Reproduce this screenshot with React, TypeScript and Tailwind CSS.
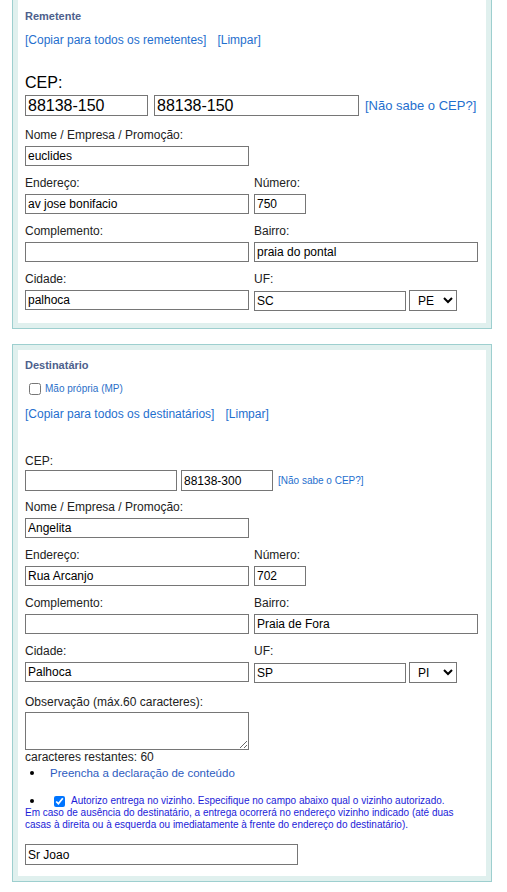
import React from 'react';

const inputCls = 'block border border-[#767676] bg-white px-[2px] text-[12px] text-black outline-none';
const labelCls = 'h-[14px] text-[12px] leading-[14px] text-[#222]';
const linkCls = 'text-[#1f6fce] cursor-pointer';

interface FieldProps {
  label: string;
  value?: string;
  width: string;
}

const Field: React.FC<FieldProps> = ({ label, value = '', width }) => (
  <div>
    <div className={labelCls}>{label}</div>
    <input className={`mt-[4px] h-[20px] ${width} ${inputCls}`} defaultValue={value} />
  </div>
);

const UfField: React.FC<{ uf: string; sel: string }> = ({ uf, sel }) => (
  <div>
    <div className={labelCls}>UF:</div>
    <div className="mt-[4px] flex items-center">
      <input className={`h-[20px] w-[152px] ${inputCls}`} defaultValue={uf} />
      <select
        defaultValue={sel}
        className="ml-[3px] h-[21px] w-[48px] border border-[#767676] bg-white pl-[4px] text-[12px] text-black"
      >
        <option>PE</option>
        <option>PI</option>
        <option>SC</option>
        <option>SP</option>
      </select>
    </div>
  </div>
);

interface AddressProps {
  nome: string;
  endereco: string;
  numero: string;
  complemento: string;
  bairro: string;
  cidade: string;
  uf: string;
  sel: string;
}

// the four rows shared by both panels
const AddressRows: React.FC<AddressProps> = (p) => (
  <>
    <Field label="Nome / Empresa / Promoção:" value={p.nome} width="w-[224px]" />
    <div className="mt-[10px] flex">
      <div className="w-[229px]">
        <Field label="Endereço:" value={p.endereco} width="w-[224px]" />
      </div>
      <Field label="Número:" value={p.numero} width="w-[52px]" />
    </div>
    <div className="mt-[10px] flex">
      <div className="w-[229px]">
        <Field label="Complemento:" value={p.complemento} width="w-[224px]" />
      </div>
      <Field label="Bairro:" value={p.bairro} width="w-[224px]" />
    </div>
    <div className="mt-[10px] flex">
      <div className="w-[229px]">
        <Field label="Cidade:" value={p.cidade} width="w-[224px]" />
      </div>
      <UfField uf={p.uf} sel={p.sel} />
    </div>
  </>
);

export default function App() {
  return (
    <div className="min-h-screen bg-white pl-[12px] font-['Liberation_Sans',Arial,sans-serif] text-black">
      {/* Remetente */}
      <div className="w-[480px] border border-t-0 border-[#9dcfcf] bg-[#e0f0ee] px-[5px] pb-[5px]">
        <div className="bg-white px-[7px] pt-[10px] pb-[12px]">
          <div className="text-[11px] font-bold leading-[13px] text-[#4d5f8c]">Remetente</div>
          <div className="mt-[10px] text-[12px] leading-[14px]">
            <span className={linkCls}>[Copiar para todos os remetentes]</span>
            <span className={`ml-[11px] ${linkCls}`}>[Limpar]</span>
          </div>
          <div className="mt-[27px] text-[16px] leading-[18px]">CEP:</div>
          <div className="mt-[3px] flex items-center">
            <input className={`h-[21px] w-[123px] ${inputCls} text-[16px]`} defaultValue="88138-150" />
            <input className={`ml-[6px] h-[21px] w-[205px] ${inputCls} text-[16px]`} defaultValue="88138-150" />
            <span className={`ml-[6px] text-[13px] ${linkCls}`}>[Não sabe o CEP?]</span>
          </div>
          <div className="mt-[12px]">
            <AddressRows
              nome="euclides"
              endereco="av jose bonifacio"
              numero="750"
              complemento=""
              bairro="praia do pontal"
              cidade="palhoca"
              uf="SC"
              sel="PE"
            />
          </div>
        </div>
      </div>

      {/* Destinatário */}
      <div className="mt-[15px] w-[480px] border border-[#9dcfcf] bg-[#e0f0ee] p-[5px]">
        <div className="bg-white px-[7px] pt-[9px] pb-[11px]">
          <div className="text-[11px] font-bold leading-[13px] text-[#4d5f8c]">Destinatário</div>
          <div className="mt-[7px] flex h-[19px] items-center">
            <input type="checkbox" className="ml-[4px] h-[12px] w-[12px]" />
            <span className="ml-[4px] text-[10px] text-[#2a6fc9]">Mão própria (MP)</span>
          </div>
          <div className="mt-[9px] text-[12px] leading-[14px]">
            <span className={linkCls}>[Copiar para todos os destinatários]</span>
            <span className={`ml-[11px] ${linkCls}`}>[Limpar]</span>
          </div>
          <div className={`mt-[33px] ${labelCls}`}>CEP:</div>
          <div className="mt-[2px] flex items-center">
            <input className={`h-[21px] w-[152px] ${inputCls}`} defaultValue="" />
            <input className={`ml-[4px] h-[21px] w-[92px] ${inputCls}`} defaultValue="88138-300" />
            <span className={`ml-[5px] text-[10px] ${linkCls}`}>[Não sabe o CEP?]</span>
          </div>
          <div className="mt-[9px]">
            <AddressRows
              nome="Angelita"
              endereco="Rua Arcanjo"
              numero="702"
              complemento=""
              bairro="Praia de Fora"
              cidade="Palhoca"
              uf="SP"
              sel="PI"
            />
          </div>
          <div className={`mt-[12px] ${labelCls}`}>Observação (máx.60 caracteres):</div>
          <textarea className="mt-[3px] block h-[38px] w-[224px] resize border border-[#767676] bg-white px-[2px] text-[12px] outline-none" />
          <div className="text-[12px] leading-[14px] text-[#222]">caracteres restantes: 60</div>
          <div className="mt-[2px] flex h-[14px] items-center">
            <span className="ml-[5px] h-[4px] w-[4px] rounded-full bg-black" />
            <span className="ml-[16px] text-[11.5px] leading-[14px] text-[#2d5cbf]">
              Preencha a declaração de conteúdo
            </span>
          </div>
          <div className="mt-[15px] flex h-[12px] items-center">
            <span className="ml-[5px] h-[4px] w-[4px] rounded-full bg-black" />
            <input type="checkbox" defaultChecked className="ml-[20px] h-[11px] w-[11px]" />
            <span className="ml-[6px] text-[10px] leading-[12px] text-[#1c1cd8]">
              Autorizo entrega no vizinho. Especifique no campo abaixo qual o vizinho autorizado.
            </span>
          </div>
          <div className="text-[10px] leading-[11.5px] text-[#1c1cd8]">
            Em caso de ausência do destinatário, a entrega ocorrerá no endereço vizinho indicado (até duas
            <br />
            casas à direita ou à esquerda ou imediatamente à frente do endereço do destinatário).
          </div>
          <input className={`mt-[14px] h-[21px] w-[273px] ${inputCls}`} defaultValue="Sr Joao" />
        </div>
      </div>
    </div>
  );
}
